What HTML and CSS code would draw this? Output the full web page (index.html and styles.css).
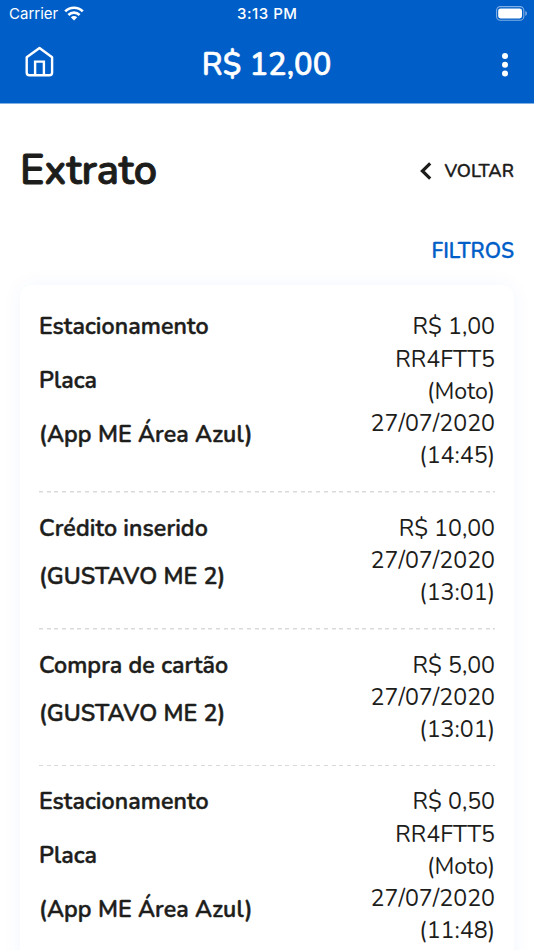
FILE: index.html
```html
<!DOCTYPE html>
<html lang="pt-BR">
    <head>
        <meta charset="UTF-8">
        <title>Extrato</title>
        <meta name="viewport" content="width=device-width, initial-scale=1.0">
        <link rel="stylesheet" href="styles.css">
    </head>
    <body>
        <header class="header">
            <div class="status">
                <div class="carrier">
                    <span class="carrier-name">Carrier</span>
                    <svg class="wifi" width="20" height="15" viewBox="0 0 20 15">
                        <g fill="none" stroke="#fff" stroke-width="2.7">
                            <path d="M1.2 5.4C6.2 .5 13.8 .5 18.8 5.4"/>
                            <path d="M4.4 8.9C7.6 5.9 12.4 5.9 15.6 8.9"/>
                        </g>
                        <path fill="#fff" d="M6.8 11.3C8.7 9.7 11.3 9.7 13.2 11.3L10 14.5Z"/>
                    </svg>
                </div>
                <span class="time">3:13 PM</span>
                <svg class="battery" width="32" height="15" viewBox="0 0 32 15">
                    <rect x=".6" y=".6" width="27.2" height="13.6" rx="3.8" fill="none" stroke="#fff" stroke-opacity=".5" stroke-width="1.1"/>
                    <rect x="2.2" y="2.4" width="23.8" height="10" rx="2.3" fill="#fff"/>
                    <path fill="#fff" fill-opacity=".55" d="M29.4 5C31.3 5.6 31.3 9.2 29.4 9.8Z"/>
                </svg>
            </div>
            <div class="bar">
                <svg class="home" width="30" height="32" viewBox="0 0 30 32" fill="none" stroke="#fff" stroke-width="2.4" stroke-linejoin="round">
                    <path d="M1.7 11.2L14.5 2L27.1 11.2V26.5Q27.1 29.3 24.3 29.3H4.5Q1.7 29.3 1.7 26.5Z"/>
                    <path stroke-linejoin="miter" d="M10.1 29V15.6H18.9V29"/>
                </svg>
                <span class="balance">R$ 12,00</span>
                <svg class="more" width="6" height="24" viewBox="0 0 6 24" fill="#fff">
                    <circle cx="3" cy="3" r="3"/>
                    <circle cx="3" cy="11.7" r="3"/>
                    <circle cx="3" cy="20.4" r="3"/>
                </svg>
            </div>
        </header>
        <main>
            <div class="title">
                <h1>Extrato</h1>
                <a class="back">
                    <svg width="12" height="18" viewBox="0 0 12 18" fill="none" stroke="#1d1d1b" stroke-width="3.2">
                        <path d="M10.2 1.3L2.4 9L10.2 16.7"/>
                    </svg>
                    <span class="back-text">VOLTAR</span>
                </a>
            </div>
            <a class="filters">FILTROS</a>
            <section class="card">
                <div class="entry">
                    <div class="labels">
                        <p>Estacionamento</p>
                        <p>Placa</p>
                        <p>(App ME Área Azul)</p>
                    </div>
                    <div class="values">
                        <p>R$ 1,00</p>
                        <p>RR4FTT5</p>
                        <p>(Moto)</p>
                        <p>27/07/2020</p>
                        <p>(14:45)</p>
                    </div>
                </div>
                <div class="entry">
                    <div class="labels">
                        <p>Crédito inserido</p>
                        <p>(GUSTAVO ME 2)</p>
                    </div>
                    <div class="values">
                        <p>R$ 10,00</p>
                        <p>27/07/2020</p>
                        <p>(13:01)</p>
                    </div>
                </div>
                <div class="entry">
                    <div class="labels">
                        <p>Compra de cartão</p>
                        <p>(GUSTAVO ME 2)</p>
                    </div>
                    <div class="values">
                        <p>R$ 5,00</p>
                        <p>27/07/2020</p>
                        <p>(13:01)</p>
                    </div>
                </div>
                <div class="entry">
                    <div class="labels">
                        <p>Estacionamento</p>
                        <p>Placa</p>
                        <p>(App ME Área Azul)</p>
                    </div>
                    <div class="values">
                        <p>R$ 0,50</p>
                        <p>RR4FTT5</p>
                        <p>(Moto)</p>
                        <p>27/07/2020</p>
                        <p>(11:48)</p>
                    </div>
                </div>
            </section>
        </main>
    </body>
</html>
```
FILE: styles.css
```css
*
{
    box-sizing: border-box;
}
body
{
    margin: 0;
    height: 950px;
    overflow: hidden;
    background-color: #fff;
    color: #1d1d1b;
    font-family: Nunito, 'Open Sans', sans-serif;
}
h1, p
{
    margin: 0;
}
svg
{
    display: block;
}

.header
{
    height: 103px;
    background-color: #005ec8;
    box-shadow: 0 1px 0 #80afe4;
    color: #fff;
}
.status
{
    display: grid;
    grid-template-columns: 1fr auto 1fr;
    align-items: center;
    height: 27px;
    padding: 0 6px 0 9px;
    font-family: Inter, sans-serif;
    font-size: 15px;
}
.carrier
{
    display: flex;
    align-items: center;
    gap: 6px;
}
.time
{
    margin-right: 2.5px;
    font-weight: 500;
    letter-spacing: .5px;
}
.battery
{
    justify-self: end;
}
.bar
{
    display: grid;
    grid-template-columns: 1fr auto 1fr;
    align-items: center;
    height: 75px;
    padding: 0 26px 0 25px;
}
.home
{
    margin-bottom: 6px;
}
.balance
{
    font-size: 31px;
    font-weight: 600;
    -webkit-text-stroke: .5px;
}
.more
{
    justify-self: end;
}

main
{
    padding: 0 20px;
}
.title
{
    display: flex;
    justify-content: space-between;
    align-items: center;
    height: 134px;
}
.title h1
{
    font-size: 41.3px;
    font-weight: 600;
    -webkit-text-stroke: 1px;
}
.back
{
    display: flex;
    align-items: center;
    gap: 12px;
    padding-top: 1px;
    font-size: 18.2px;
    font-weight: 600;
    -webkit-text-stroke: .3px;
}
.filters
{
    display: block;
    height: 48px;
    line-height: 28px;
    text-align: right;
    font-size: 21px;
    font-weight: 600;
    -webkit-text-stroke: .3px;
    color: #005ec8;
}
.card
{
    padding: 6.4px 19px;
    border-radius: 12px;
    background-color: #fff;
    box-shadow: 0 0 20px rgba(0, 80, 220, .05);
}
.entry
{
    display: flex;
    justify-content: space-between;
    padding: 20px 0;
    line-height: 32.27px;
    font-size: 23.2px;
    background: repeating-linear-gradient(to right, #dadada 0 4px, transparent 4px 7.7px) bottom / 100% 1.5px no-repeat;
}
.labels
{
    display: flex;
    flex-direction: column;
    font-size: 23.2px;
    font-weight: 600;
    letter-spacing: .1px;
    -webkit-text-stroke: .5px;
}
.labels p
{
    flex: 1;
}
.values
{
    text-align: right;
}
```
